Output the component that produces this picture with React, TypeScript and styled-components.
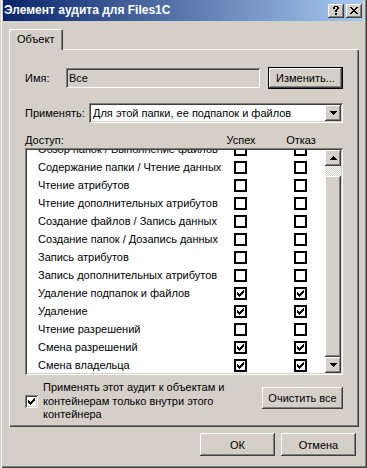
import React from "react"
import styled, { createGlobalStyle } from "styled-components"

const GlobalStyle = createGlobalStyle`
  html, body {
    margin: 0;
    padding: 0;
    background: #d4d0c8;
  }
  body {
    font-family: "Liberation Sans", Arial, sans-serif;
    font-size: 11px;
    color: #000;
  }
`

const face = "#d4d0c8"
const raised = `inset -1px -1px #404040, inset 1px 1px #ffffff, inset -2px -2px #808080, inset 2px 2px ${face}`
const sunken = `inset 1px 1px #808080, inset -1px -1px #ffffff, inset 2px 2px #404040, inset -2px -2px ${face}`

interface IRight {
  label: string
  success: boolean
  failure: boolean
}

const rights: IRight[] = [
  { label: "Обзор папок / Выполнение файлов", success: false, failure: false },
  { label: "Содержание папки / Чтение данных", success: false, failure: false },
  { label: "Чтение атрибутов", success: false, failure: false },
  { label: "Чтение дополнительных атрибутов", success: false, failure: false },
  { label: "Создание файлов / Запись данных", success: false, failure: false },
  { label: "Создание папок / Дозапись данных", success: false, failure: false },
  { label: "Запись атрибутов", success: false, failure: false },
  { label: "Запись дополнительных атрибутов", success: false, failure: false },
  { label: "Удаление подпапок и файлов", success: true, failure: true },
  { label: "Удаление", success: true, failure: true },
  { label: "Чтение разрешений", success: false, failure: false },
  { label: "Смена разрешений", success: true, failure: true },
  { label: "Смена владельца", success: true, failure: true },
]

const CheckMark = () => (
  <svg width="7" height="7" viewBox="0 0 7 7" shapeRendering="crispEdges">
    <path
      d="M0 2h1v3H0zM1 3h1v3H1zM2 4h1v3H2zM3 3h1v3H3zM4 2h1v3H4zM5 1h1v3H5zM6 0h1v3H6z"
      fill="#000"
    />
  </svg>
)

const Arrow = ({ down }: { down?: boolean }) => (
  <svg width="7" height="4" viewBox="0 0 7 4" shapeRendering="crispEdges">
    <path
      d={down ? "M0 0h7v1H0zM1 1h5v1H1zM2 2h3v1H2zM3 3h1v1H3z" : "M3 0h1v1H3zM2 1h3v1H2zM1 2h5v1H1zM0 3h7v1H0z"}
      fill="#000"
    />
  </svg>
)

const App: React.FC = () => {
  return (
    <>
      <GlobalStyle />
      <Window>
        <TitleBar>
          <Title>Элемент аудита для Files1C</Title>
          <CaptionButtons>
            <CaptionButton>
              <svg width="6" height="9" viewBox="0 0 6 9" shapeRendering="crispEdges">
                <path
                  d="M1 0h4v1H1zM0 1h2v2H0zM4 1h2v2H4zM3 3h2v1H3zM2 4h2v2H2zM2 7h2v2H2z"
                  fill="#000"
                />
              </svg>
            </CaptionButton>
            <CaptionButton>
              <svg width="8" height="7" viewBox="0 0 8 7" shapeRendering="crispEdges">
                <path
                  d="M0 0h2v1H0zM6 0h2v1H6zM1 1h2v1H1zM5 1h2v1H5zM2 2h4v1H2zM3 3h2v1H3zM2 4h4v1H2zM1 5h2v1H1zM5 5h2v1H5zM0 6h2v1H0zM6 6h2v1H6z"
                  fill="#000"
                />
              </svg>
            </CaptionButton>
          </CaptionButtons>
        </TitleBar>

        <Body>
          <Tabs>
            <Tab>Объект</Tab>
          </Tabs>
          <Panel>
            <FieldRow>
              <FieldLabel width={41}>Имя:</FieldLabel>
              <ReadOnlyBox>Все</ReadOnlyBox>
              <Button width={75} isDefault>
                Изменить...
              </Button>
            </FieldRow>

            <SelectRow>
              <FieldLabel width={64}>Применять:</FieldLabel>
              <Select>
                <SelectValue>Для этой папки, ее подпапок и файлов</SelectValue>
                <DropButton>
                  <Arrow down />
                </DropButton>
              </Select>
            </SelectRow>

            <ListHeader>
              <HeaderCell>Доступ:</HeaderCell>
              <HeaderCell center>Успех</HeaderCell>
              <HeaderCell center>Отказ</HeaderCell>
            </ListHeader>

            <ListBox>
              <ListViewport>
                <ListContent>
                  {rights.map((right: IRight, key: number) => (
                    <ListRow key={key}>
                      <RowLabel>{right.label}</RowLabel>
                      <CheckCell>
                        <FlatCheck>{right.success && <CheckMark />}</FlatCheck>
                      </CheckCell>
                      <CheckCell>
                        <FlatCheck>{right.failure && <CheckMark />}</FlatCheck>
                      </CheckCell>
                    </ListRow>
                  ))}
                </ListContent>
              </ListViewport>
              <ScrollBar>
                <ScrollButton>
                  <Arrow />
                </ScrollButton>
                <ScrollTrack />
                <ScrollThumb />
                <ScrollButton>
                  <Arrow down />
                </ScrollButton>
              </ScrollBar>
            </ListBox>

            <BottomRow>
              <InheritOption>
                <SunkenCheck>
                  <CheckMark />
                </SunkenCheck>
                <OptionText>
                  Применять этот аудит к объектам и
                  <br />
                  контейнерам только внутри этого
                  <br />
                  контейнера
                </OptionText>
              </InheritOption>
              <ClearButton width={81}>Очистить все</ClearButton>
            </BottomRow>
          </Panel>

          <DialogButtons>
            <Button width={75} tall>
              ОК
            </Button>
            <Button width={75} tall>
              Отмена
            </Button>
          </DialogButtons>
        </Body>
      </Window>
    </>
  )
}

export default App

const Window = styled.div`
  box-sizing: border-box;
  width: 367px;
  height: 468px;
  padding: 0 4px 4px 3px;
  background: ${face};
  box-shadow: inset 1px 0 ${face}, inset 2px 0 #ffffff, inset -1px -1px #404040,
    inset -2px -2px #808080;
`

const TitleBar = styled.div`
  display: flex;
  align-items: center;
  justify-content: space-between;
  height: 21px;
  padding: 0 1px 0 1px;
  background: linear-gradient(to right, #0a246a, #a6caf0);
`

const Title = styled.div`
  color: #ffffff;
  font-weight: bold;
  font-size: 12px;
  line-height: 21px;
  white-space: nowrap;
`

const CaptionButtons = styled.div`
  display: flex;
  gap: 2px;
`

const CaptionButton = styled.div`
  display: flex;
  align-items: center;
  justify-content: center;
  width: 16px;
  height: 14px;
  background: ${face};
  box-shadow: ${raised};
`

const Body = styled.div`
  display: flex;
  flex-direction: column;
  padding: 8px 4px 0 6px;
`

const Tabs = styled.div`
  display: flex;
  position: relative;
  z-index: 1;
  margin-bottom: -1px;
`

const Tab = styled.div`
  box-sizing: border-box;
  width: 54px;
  height: 21px;
  padding: 3px 0 0 8px;
  line-height: 14px;
  background: ${face};
  border-top-left-radius: 2px;
  border-top-right-radius: 2px;
  box-shadow: inset 1px 1px #ffffff, inset -1px 0 #404040, inset -2px 0 #808080;
`

const Panel = styled.div`
  box-sizing: border-box;
  display: flex;
  flex-direction: column;
  width: 350px;
  height: 378px;
  padding: 18px 16px 0 16px;
  box-shadow: inset 1px 1px #ffffff, inset -1px -1px #404040, inset -2px -2px #808080;
`

const FieldRow = styled.div`
  display: flex;
  align-items: center;
  height: 22px;
`

const SelectRow = styled.div`
  display: flex;
  align-items: center;
  height: 20px;
  margin-top: 14px;
`

const FieldLabel = styled.div<{ width: number }>`
  flex: none;
  width: ${props => props.width}px;
`

const ReadOnlyBox = styled.div`
  box-sizing: border-box;
  width: 194px;
  height: 20px;
  margin-right: 8px;
  padding: 0 3px;
  line-height: 20px;
  background: ${face};
  box-shadow: ${sunken};
`

const Button = styled.div<{ width: number; isDefault?: boolean; tall?: boolean }>`
  box-sizing: border-box;
  display: flex;
  align-items: center;
  justify-content: center;
  width: ${props => props.width}px;
  height: ${props => (props.tall ? 23 : 22)}px;
  background: ${face};
  box-shadow: ${props =>
    props.isDefault
      ? `inset 0 0 0 1px #000000, inset -2px -2px #404040, inset 2px 2px #ffffff, inset -3px -3px #808080`
      : raised};
`

const ClearButton = styled(Button)`
  margin-top: 6px;
`

const Select = styled.div`
  box-sizing: border-box;
  display: flex;
  align-items: center;
  justify-content: space-between;
  flex: 1;
  height: 20px;
  padding: 2px;
  background: #ffffff;
  box-shadow: ${sunken};
`

const SelectValue = styled.div`
  padding-left: 2px;
  white-space: nowrap;
`

const DropButton = styled.div`
  display: flex;
  align-items: center;
  justify-content: center;
  width: 16px;
  height: 16px;
  background: ${face};
  box-shadow: ${raised};
`

const ListHeader = styled.div`
  display: grid;
  grid-template-columns: 186px 60px 60px;
  height: 16px;
  margin-top: 9px;
  line-height: 16px;
`

const HeaderCell = styled.div<{ center?: boolean }>`
  text-align: ${props => (props.center ? "center" : "left")};
`

const ListBox = styled.div`
  box-sizing: border-box;
  display: flex;
  height: 227px;
  padding: 2px;
  background: #ffffff;
  box-shadow: ${sunken};
`

const ListViewport = styled.div`
  flex: 1;
  overflow: hidden;
`

const ListContent = styled.div`
  margin-top: -10px;
`

const ListRow = styled.div`
  display: grid;
  grid-template-columns: 196px 60px 60px;
  align-items: center;
  height: 18px;
  padding-left: 11px;
`

const RowLabel = styled.div`
  white-space: nowrap;
  overflow: hidden;
`

const CheckCell = styled.div`
  display: flex;
`

const FlatCheck = styled.div`
  box-sizing: border-box;
  display: flex;
  align-items: center;
  justify-content: center;
  width: 13px;
  height: 13px;
  border: 2px solid #000000;
  background: #ffffff;
`

const ScrollBar = styled.div`
  display: flex;
  flex-direction: column;
  width: 16px;
`

const ScrollButton = styled.div`
  display: flex;
  align-items: center;
  justify-content: center;
  height: 16px;
  background: ${face};
  box-shadow: ${raised};
`

const ScrollTrack = styled.div`
  height: 10px;
  background: repeating-conic-gradient(#ffffff 0 25%, ${face} 0 50%) 0 0 / 2px 2px;
`

const ScrollThumb = styled.div`
  flex: 1;
  background: ${face};
  box-shadow: ${raised};
`

const BottomRow = styled.div`
  display: flex;
  justify-content: space-between;
  align-items: flex-start;
  margin-top: 6px;
`

const InheritOption = styled.div`
  display: flex;
  align-items: center;
  gap: 5px;
`

const SunkenCheck = styled.div`
  display: flex;
  align-items: center;
  justify-content: center;
  flex: none;
  width: 13px;
  height: 13px;
  background: #ffffff;
  box-shadow: ${sunken};
`

const OptionText = styled.div`
  line-height: 13.5px;
`

const DialogButtons = styled.div`
  display: flex;
  justify-content: flex-end;
  gap: 6px;
  width: 347px;
  margin-top: 6px;
`
